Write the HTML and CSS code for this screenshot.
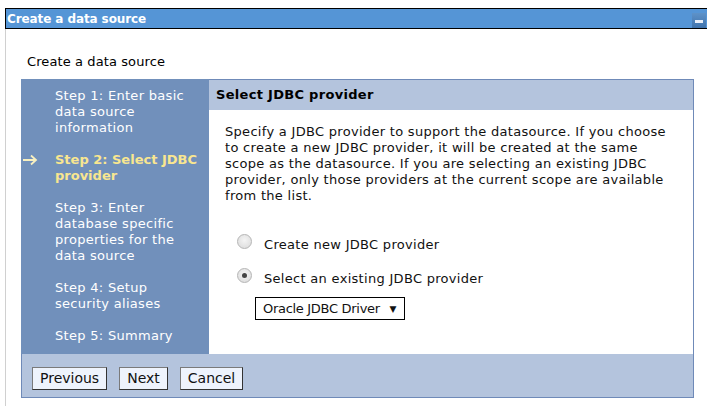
FILE: index.html
```html
<!DOCTYPE html>
<html>
<head>
<meta charset="utf-8">
<link rel="stylesheet" href="styles.css">
</head>
<body>
<div class="titlebar">
  <span class="title">Create a data source</span>
  <span class="minbtn"><span class="minbar"></span></span>
</div>
<div class="page">
  <div class="heading">Create a data source</div>
  <div class="wizard">
    <div class="main">
      <ul class="steps">
        <li>Step 1: Enter basic data source information</li>
        <li class="active"><svg class="arrow" width="16" height="12" viewBox="0 0 16 12"><path d="M1 6H14M9 1.5L14 6L9 10.5" fill="none" stroke="#f8f0c0" stroke-width="1.8"/></svg>Step 2: Select JDBC provider</li>
        <li>Step 3: Enter database specific properties for the data source</li>
        <li>Step 4: Setup security aliases</li>
        <li>Step 5: Summary</li>
      </ul>
      <div class="panel">
        <div class="panel-head">Select JDBC provider</div>
        <div class="panel-body">
          <p class="desc">Specify a JDBC provider to support the datasource. If you choose to create a new JDBC provider, it will be created at the same scope as the datasource. If you are selecting an existing JDBC provider, only those providers at the current scope are available from the list.</p>
          <div class="option"><span class="radio"></span><span>Create new JDBC provider</span></div>
          <div class="option"><span class="radio checked"></span><span>Select an existing JDBC provider</span></div>
          <div class="select"><span>Oracle JDBC Driver</span><span class="caret">▼</span></div>
        </div>
      </div>
    </div>
    <div class="buttons">
      <span class="btn">Previous</span>
      <span class="btn">Next</span>
      <span class="btn">Cancel</span>
    </div>
  </div>
</div>
</body>
</html>
```
FILE: styles.css
```css
html, body {
  margin: 0;
  padding: 0;
  background: #fff;
  font-family: "DejaVu Sans", Verdana, sans-serif;
  font-size: 13px;
  letter-spacing: 0.3px;
  color: #000;
}
.titlebar {
  margin-top: 8px;
  margin-left: 5px;
  height: 19px;
  background: #5595d6;
  border-top: 1px solid #000;
  border-bottom: 1px solid #000;
  border-left: 1px solid #000;
  display: flex;
  align-items: center;
  justify-content: space-between;
}
.title {
  font-family: "DejaVu Sans", sans-serif;
  font-weight: bold;
  font-size: 12px;
  letter-spacing: -0.1px;
  color: #fff;
  padding-left: 1px;
}
.minbtn {
  width: 14px;
  height: 15px;
  margin-top: 3px;
  margin-right: 1px;
  background: linear-gradient(#5e92c8, #3f73ad);
  display: flex;
  align-items: center;
  justify-content: center;
}
.minbar {
  width: 8px;
  height: 3px;
  background: #e8eef8;
  margin-top: 3px;
}
.page {
  margin-left: 5px;
  border-left: 1px solid #d0d0d0;
  padding: 25px 13px 8px 15px;
  min-height: 340px;
}
.heading {
  padding-left: 6px;
  line-height: 16px;
  margin-bottom: 9px;
  letter-spacing: 0.1px;
}
.wizard {
  width: 673px;
}
.main {
  display: flex;
}
.steps {
  list-style: none;
  margin: 0;
  padding: 9px 8px 10px 34px;
  width: 146px;
  background: #7190bb;
  color: #fff;
  line-height: 16px;
}
.steps li {
  margin-bottom: 16px;
  position: relative;
}
.steps li:last-child {
  margin-bottom: 0;
}
.steps li.active {
  color: #f8e690;
  font-weight: bold;
  letter-spacing: 0;
  margin-right: -6px;
}
.arrow {
  position: absolute;
  left: -33px;
  top: 2px;
}
.panel {
  flex: 1;
  border-top: 1px solid #6f8ab8;
  border-right: 1px solid #6f8ab8;
  display: flex;
  flex-direction: column;
}
.panel-head {
  background: #b4c4dd;
  height: 30px;
  line-height: 30px;
  padding-left: 7px;
  font-weight: bold;
}
.panel-body {
  padding: 14px 20px 33px 16px;
  color: #111;
  flex: 1;
}
.desc {
  margin: 0 0 32px 0;
  line-height: 16px;
}
.option {
  display: flex;
  align-items: center;
  gap: 12px;
  margin-left: 12px;
  margin-bottom: 18px;
  height: 16px;
}
.radio {
  width: 13px;
  height: 13px;
  border-radius: 50%;
  border: 1px solid #b5b5b5;
  background: radial-gradient(circle at 50% 40%, #f4f4f4, #d9d9d9);
  position: relative;
  margin-top: -6px;
}
.radio.checked::after {
  content: "";
  position: absolute;
  left: 4px;
  top: 4px;
  width: 5px;
  height: 5px;
  border-radius: 50%;
  background: #444;
}
.select {
  margin-left: 30px;
  margin-top: -7px;
  border: 1px solid #000;
  display: flex;
  align-items: center;
  justify-content: space-between;
  padding: 0 8px 0 7px;
  box-sizing: border-box;
  width: 150px;
  height: 23px;
  white-space: nowrap;
  letter-spacing: -0.3px;
}
.caret {
  font-size: 9px;
}
.buttons {
  background: #b4c4dd;
  border: 1px solid #6f8ab8;
  border-top: none;
  height: 44px;
  display: flex;
  align-items: center;
  gap: 12px;
  padding-left: 10px;
  padding-top: 6px;
  box-sizing: border-box;
}
.btn {
  background: #eef3fc;
  border: 1px solid #7a7a7a;
  border-right-color: #333;
  border-bottom-color: #333;
  padding: 0 7px;
  height: 21px;
  line-height: 21px;
  font-size: 14px;
  letter-spacing: 0;
  color: #111;
}
```
